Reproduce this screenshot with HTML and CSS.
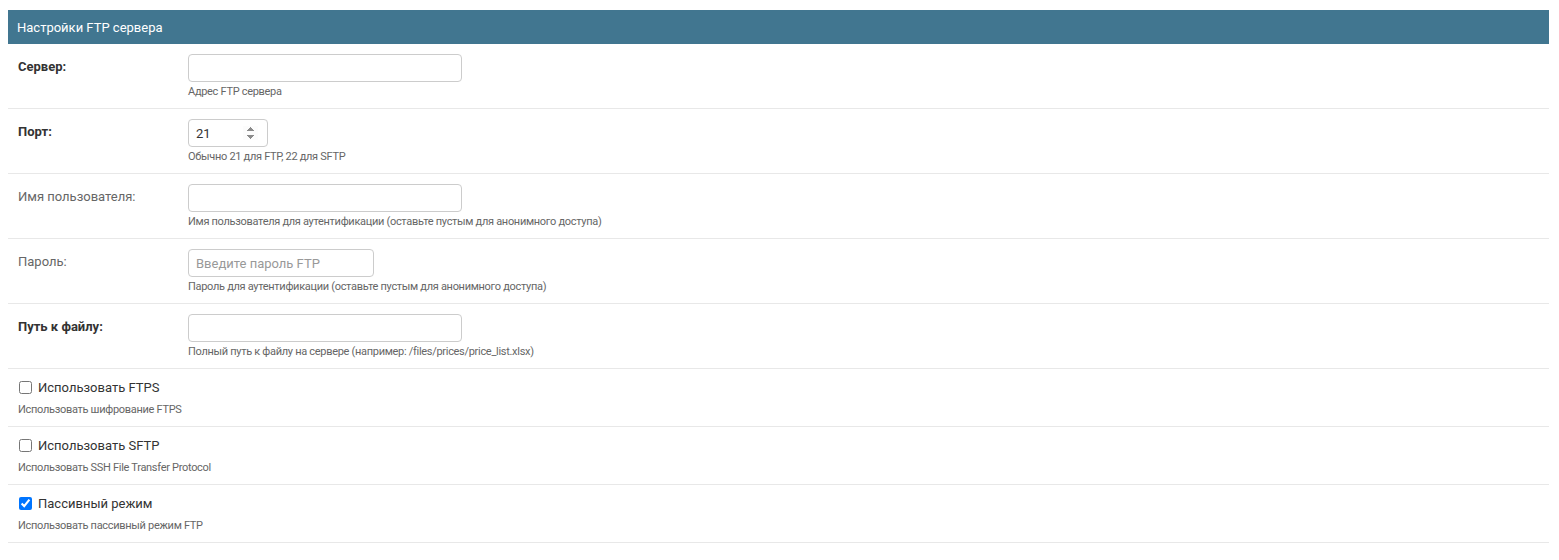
FILE: index.html
```html
<!DOCTYPE html>
<html lang="ru">
<head>
    <meta charset="UTF-8">
    <meta name="viewport" content="width=device-width, initial-scale=1.0">
    <title>Настройки FTP сервера</title>
    <link rel="stylesheet" href="styles.css">
</head>
<body>
    <fieldset class="module aligned">
        <h2>Настройки FTP сервера</h2>

        <div class="form-row">
            <div class="flex-container">
                <label class="required" for="id_ftp_host">Сервер:</label>
                <input type="text" id="id_ftp_host" class="vTextField">
            </div>
            <div class="help">Адрес FTP сервера</div>
        </div>

        <div class="form-row">
            <div class="flex-container">
                <label class="required" for="id_ftp_port">Порт:</label>
                <input type="number" id="id_ftp_port" class="vIntegerField" value="21">
            </div>
            <div class="help">Обычно 21 для FTP, 22 для SFTP</div>
        </div>

        <div class="form-row">
            <div class="flex-container">
                <label for="id_ftp_user">Имя пользователя:</label>
                <input type="text" id="id_ftp_user" class="vTextField">
            </div>
            <div class="help">Имя пользователя для аутентификации (оставьте пустым для анонимного доступа)</div>
        </div>

        <div class="form-row">
            <div class="flex-container">
                <label for="id_ftp_password">Пароль:</label>
                <input type="password" id="id_ftp_password" class="vPasswordField" placeholder="Введите пароль FTP">
            </div>
            <div class="help">Пароль для аутентификации (оставьте пустым для анонимного доступа)</div>
        </div>

        <div class="form-row">
            <div class="flex-container">
                <label class="required" for="id_ftp_path">Путь к файлу:</label>
                <input type="text" id="id_ftp_path" class="vTextField">
            </div>
            <div class="help">Полный путь к файлу на сервере (например: /files/prices/price_list.xlsx)</div>
        </div>

        <div class="form-row checkbox-row">
            <div class="checkbox-line">
                <input type="checkbox" id="id_use_ftps">
                <label class="vCheckboxLabel" for="id_use_ftps">Использовать FTPS</label>
            </div>
            <div class="help">Использовать шифрование FTPS</div>
        </div>

        <div class="form-row checkbox-row">
            <div class="checkbox-line">
                <input type="checkbox" id="id_use_sftp">
                <label class="vCheckboxLabel" for="id_use_sftp">Использовать SFTP</label>
            </div>
            <div class="help">Использовать SSH File Transfer Protocol</div>
        </div>

        <div class="form-row checkbox-row">
            <div class="checkbox-line">
                <input type="checkbox" id="id_passive_mode" checked>
                <label class="vCheckboxLabel" for="id_passive_mode">Пассивный режим</label>
            </div>
            <div class="help">Использовать пассивный режим FTP</div>
        </div>
    </fieldset>
</body>
</html>
```

FILE: styles.css
```css
body {
    font-family: Roboto, "Liberation Sans", sans-serif;
    background-color: #fff;
    color: #333;
    margin: 0;
    padding: 10px 10px 0 8px;
}

fieldset.module {
    margin: 0;
    padding: 0;
    border: none;
    min-width: 0;
}

.module h2 {
    margin: 0;
    padding: 9px 9px 8px;
    background-color: #417690;
    color: #fff;
    font-size: 13px;
    font-weight: 400;
    line-height: 17px;
}

.form-row {
    padding: 10px;
    border-bottom: 1px solid #e8e8e8;
    font-size: 13px;
}

.flex-container {
    display: flex;
    align-items: flex-start;
}

.aligned label {
    display: block;
    width: 170px;
    min-width: 170px;
    box-sizing: border-box;
    padding: 5px 10px 0 0;
    color: #666;
    font-size: 13px;
    line-height: 16px;
}

.aligned label.required {
    color: #333;
    font-weight: 700;
}

input[type="text"],
input[type="number"],
input[type="password"] {
    box-sizing: border-box;
    height: 28px;
    margin: 0;
    padding: 5px 6px 5px 7px;
    border: 1px solid #ccc;
    border-radius: 4px;
    font-family: inherit;
    font-size: 13px;
    color: #333;
    background-color: #fff;
    outline: none;
}

input[type="number"]::-webkit-inner-spin-button {
    opacity: 1;
    margin-right: 3px;
}

.vTextField {
    width: 274px;
}

.vIntegerField {
    width: 80px;
}

.vPasswordField {
    width: 186px;
}

input::placeholder {
    color: #999;
}

.help {
    margin: 4px 0 0 170px;
    color: #666;
    font-size: 11px;
    line-height: 12px;
    letter-spacing: -0.3px;
}

.checkbox-row .help {
    margin-left: 0;
    margin-top: 8px;
}

.checkbox-line {
    display: flex;
    align-items: center;
}

.checkbox-line input[type="checkbox"] {
    width: 13px;
    height: 13px;
    margin: 0 6px 0 1px;
}

.aligned .checkbox-line label.vCheckboxLabel {
    width: auto;
    min-width: 0;
    padding: 0;
    color: #333;
    font-weight: 400;
    line-height: 17px;
}
```
